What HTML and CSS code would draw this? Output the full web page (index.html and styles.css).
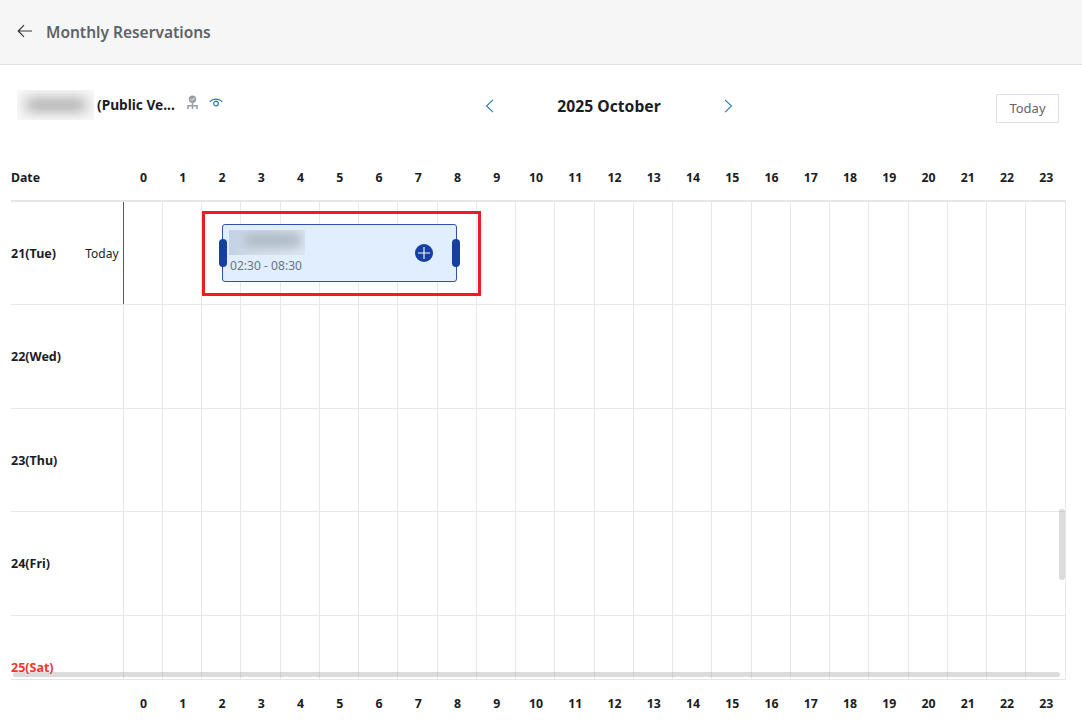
FILE: index.html
```html
<!DOCTYPE html>
<html lang="en">
<head>
<meta charset="utf-8">
<title>Monthly Reservations</title>
<link rel="stylesheet" href="styles.css">
</head>
<body>
<header class="topbar">
  <svg class="back" width="16" height="14" viewBox="0 0 16 14"><path d="M15 7H1.500M7 1.200 1.200 7 7 12.800" fill="none" stroke="#33373d" stroke-width="1.200"/></svg>
  <h1 class="title">Monthly Reservations</h1>
</header>
<section class="toolbar">
  <div class="resource">
    <div class="blur-box"><div class="blur-ink"></div></div>
    <span class="resource-name">(Public Ve...</span>
    <svg class="org" width="11" height="15" viewBox="0 0 11 15"><circle cx="5.500" cy="4.200" r="3.700" fill="#9a9da3"/><path d="M3.700 4.200 5 5.500 7.400 3" fill="none" stroke="#fff" stroke-width="1"/><path d="M5.500 8v6M1 14v-3.200h9V14" fill="none" stroke="#9a9da3" stroke-width="1.600"/></svg>
    <svg class="eye" width="14" height="9" viewBox="0 0 14 9"><path d="M.6 3.800C4 .3 10 .3 13.400 3.800" fill="none" stroke="#2a72c4" stroke-width="1.200"/><circle cx="7" cy="5.500" r="2.300" fill="none" stroke="#2a72c4" stroke-width="1.200"/></svg>
  </div>
  <div class="month-nav">
    <svg class="chev" width="9" height="14" viewBox="0 0 9 14"><path d="M8 .8 1.500 7 8 13.200" fill="none" stroke="#2f77c0" stroke-width="1.100"/></svg>
    <span class="month">2025 October</span>
    <svg class="chev" width="9" height="14" viewBox="0 0 9 14"><path d="M1 .8 7.500 7 1 13.200" fill="none" stroke="#2f77c0" stroke-width="1.100"/></svg>
  </div>
  <button class="today-btn">Today</button>
</section>
<div class="hours head-hours">
  <div class="date-head">Date</div>
  <div>0</div><div>1</div><div>2</div><div>3</div><div>4</div><div>5</div><div>6</div><div>7</div><div>8</div><div>9</div><div>10</div><div>11</div><div>12</div><div>13</div><div>14</div><div>15</div><div>16</div><div>17</div><div>18</div><div>19</div><div>20</div><div>21</div><div>22</div><div>23</div>
</div>
<main class="calendar">
  <div class="row">
    <div class="day today-row"><span>21(Tue)</span><span class="today-tag">Today</span></div>
    <div class="cell"></div><div class="cell"></div><div class="cell"></div><div class="cell"></div><div class="cell"></div><div class="cell"></div><div class="cell"></div><div class="cell"></div><div class="cell"></div><div class="cell"></div><div class="cell"></div><div class="cell"></div><div class="cell"></div><div class="cell"></div><div class="cell"></div><div class="cell"></div><div class="cell"></div><div class="cell"></div><div class="cell"></div><div class="cell"></div><div class="cell"></div><div class="cell"></div><div class="cell"></div><div class="cell"></div>
    <div class="event">
      <div class="event-blur"></div>
      <div class="event-time">02:30 - 08:30</div>
      <span class="handle handle-left"></span>
      <span class="handle handle-right"></span>
      <svg class="plus" width="18" height="18" viewBox="0 0 18 18"><circle cx="9" cy="9" r="9" fill="#15409f"/><path d="M9 3v12M3 9h12" stroke="#fff" stroke-width="1.100"/></svg>
    </div>
  </div>
  <div class="row">
    <div class="day"><span>22(Wed)</span></div>
    <div class="cell"></div><div class="cell"></div><div class="cell"></div><div class="cell"></div><div class="cell"></div><div class="cell"></div><div class="cell"></div><div class="cell"></div><div class="cell"></div><div class="cell"></div><div class="cell"></div><div class="cell"></div><div class="cell"></div><div class="cell"></div><div class="cell"></div><div class="cell"></div><div class="cell"></div><div class="cell"></div><div class="cell"></div><div class="cell"></div><div class="cell"></div><div class="cell"></div><div class="cell"></div><div class="cell"></div>
  </div>
  <div class="row">
    <div class="day"><span>23(Thu)</span></div>
    <div class="cell"></div><div class="cell"></div><div class="cell"></div><div class="cell"></div><div class="cell"></div><div class="cell"></div><div class="cell"></div><div class="cell"></div><div class="cell"></div><div class="cell"></div><div class="cell"></div><div class="cell"></div><div class="cell"></div><div class="cell"></div><div class="cell"></div><div class="cell"></div><div class="cell"></div><div class="cell"></div><div class="cell"></div><div class="cell"></div><div class="cell"></div><div class="cell"></div><div class="cell"></div><div class="cell"></div>
  </div>
  <div class="row">
    <div class="day"><span>24(Fri)</span></div>
    <div class="cell"></div><div class="cell"></div><div class="cell"></div><div class="cell"></div><div class="cell"></div><div class="cell"></div><div class="cell"></div><div class="cell"></div><div class="cell"></div><div class="cell"></div><div class="cell"></div><div class="cell"></div><div class="cell"></div><div class="cell"></div><div class="cell"></div><div class="cell"></div><div class="cell"></div><div class="cell"></div><div class="cell"></div><div class="cell"></div><div class="cell"></div><div class="cell"></div><div class="cell"></div><div class="cell"></div>
  </div>
  <div class="row">
    <div class="day sat"><span>25(Sat)</span></div>
    <div class="cell"></div><div class="cell"></div><div class="cell"></div><div class="cell"></div><div class="cell"></div><div class="cell"></div><div class="cell"></div><div class="cell"></div><div class="cell"></div><div class="cell"></div><div class="cell"></div><div class="cell"></div><div class="cell"></div><div class="cell"></div><div class="cell"></div><div class="cell"></div><div class="cell"></div><div class="cell"></div><div class="cell"></div><div class="cell"></div><div class="cell"></div><div class="cell"></div><div class="cell"></div><div class="cell"></div>
  </div>
  <div class="scroll-h"></div>
  <div class="scroll-v"></div>
  <div class="highlight"></div>
</main>
<div class="hours foot-hours">
  <div class="date-head"></div>
  <div>0</div><div>1</div><div>2</div><div>3</div><div>4</div><div>5</div><div>6</div><div>7</div><div>8</div><div>9</div><div>10</div><div>11</div><div>12</div><div>13</div><div>14</div><div>15</div><div>16</div><div>17</div><div>18</div><div>19</div><div>20</div><div>21</div><div>22</div><div>23</div>
</div>
</body>
</html>
```
FILE: styles.css
```css
* { box-sizing: border-box; }
html, body { margin: 0; height: 100%; overflow: hidden; background: #fff; }
body { font-family: "Noto Sans", "Open Sans", sans-serif; color: #1a1d24; }

.topbar { height: 65px; background: #f6f6f6; border-bottom: 1px solid #dcdfe6; display: flex; align-items: center; padding-left: 17px; gap: 13px; }
.title { margin: 0; font-size: 15.5px; font-weight: 600; color: #5e6268; }
.back { flex: none; margin-top: -2px; }

.toolbar { height: 86px; position: relative; display: flex; align-items: flex-start; justify-content: space-between; padding: 25px 23px 0 17px; }
.resource { display: flex; align-items: center; width: 300px; height: 30px; }
.blur-box { width: 77px; height: 30px; background: #f9f9f9; display: flex; align-items: center; justify-content: center; overflow: hidden; flex: none; }
.blur-ink { width: 60px; height: 12px; background: #a0a0a0; filter: blur(7px); }
.resource-name { font-size: 13.7px; font-weight: 700; margin-left: 3px; margin-top: -2px; white-space: nowrap; }
.org { margin-left: 12px; margin-top: -5px; }
.eye { margin-left: 11px; margin-top: -5px; }
.month-nav { display: flex; align-items: center; justify-content: space-between; width: 249px; height: 32px; margin-left: -95px; }
.month { font-size: 15.7px; font-weight: 700; }
.chev { flex: none; }
.today-btn { width: 63px; height: 29px; margin-top: 4px; background: #fff; border: 1px solid #dfe1e8; font: inherit; font-size: 13px; line-height: 24px; color: #5f6672; padding: 0 0 2px; }

.hours { display: grid; grid-template-columns: 113px repeat(24, 39.250px); margin-left: 11px; font-size: 12.300px; font-weight: 700; text-align: center; align-items: center; }
.head-hours { height: 49px; padding-top: 3px; }
.foot-hours { height: 43px; padding-top: 3px; }
.date-head { text-align: left; }

.calendar { position: relative; margin-left: 11px; width: 1055px; height: 480px; overflow: hidden; border-top: 2px solid #e6e6e6; border-bottom: 1px solid #e6e6e6; }
.row { position: relative; display: grid; grid-template-columns: 112.500px repeat(24, 39.250px); height: 103.450px; border-bottom: 1px solid #e8e8e8; }
.day { display: flex; align-items: center; justify-content: space-between; font-size: 12.500px; font-weight: 700; padding-right: 4px; border-right: 1px solid #e5e5e5; }
.today-row { border-right-color: #5b5560; }
.today-tag { font-weight: 400; font-size: 12px; }
.sat { color: #f5332c; padding-top: 1px; }
.cell { border-right: 1px solid #e8e8e8; }

.event { position: absolute; left: 211px; top: 22px; width: 235px; height: 58px; background: #e0eefd; border: 1px solid #2a52ae; border-radius: 3px; }
.event-blur { position: absolute; left: 6px; top: 5px; width: 76px; height: 25px; background: linear-gradient(90deg, #c3d0e6, #d6dfeb 35%, #dfe7f2); overflow: hidden; }
.event-blur::after { content: ""; display: block; margin: 3px 16px; width: 56px; height: 14px; background: #a9b5c1; filter: blur(6px); }
.event-time { position: absolute; left: 7px; top: 32px; font-size: 12.100px; color: #6c7480; white-space: nowrap; }
.handle { position: absolute; top: 14px; width: 8px; height: 28px; background: #15409f; border-radius: 4px; }
.handle-left { left: -4px; }
.handle-right { right: -4px; }
.plus { position: absolute; left: 191.500px; top: 19px; }

.scroll-h { position: absolute; left: 2px; bottom: 2px; width: 1047px; height: 5px; background: rgba(120, 120, 125, .26); border-radius: 3px; }
.scroll-v { position: absolute; right: 1px; top: 307px; width: 6px; height: 71px; background: rgba(120, 120, 125, .26); border-radius: 3px; }
.highlight { position: absolute; left: 191px; top: 9px; width: 279px; height: 85px; border: 3px solid #ed1c24; pointer-events: none; }
```
